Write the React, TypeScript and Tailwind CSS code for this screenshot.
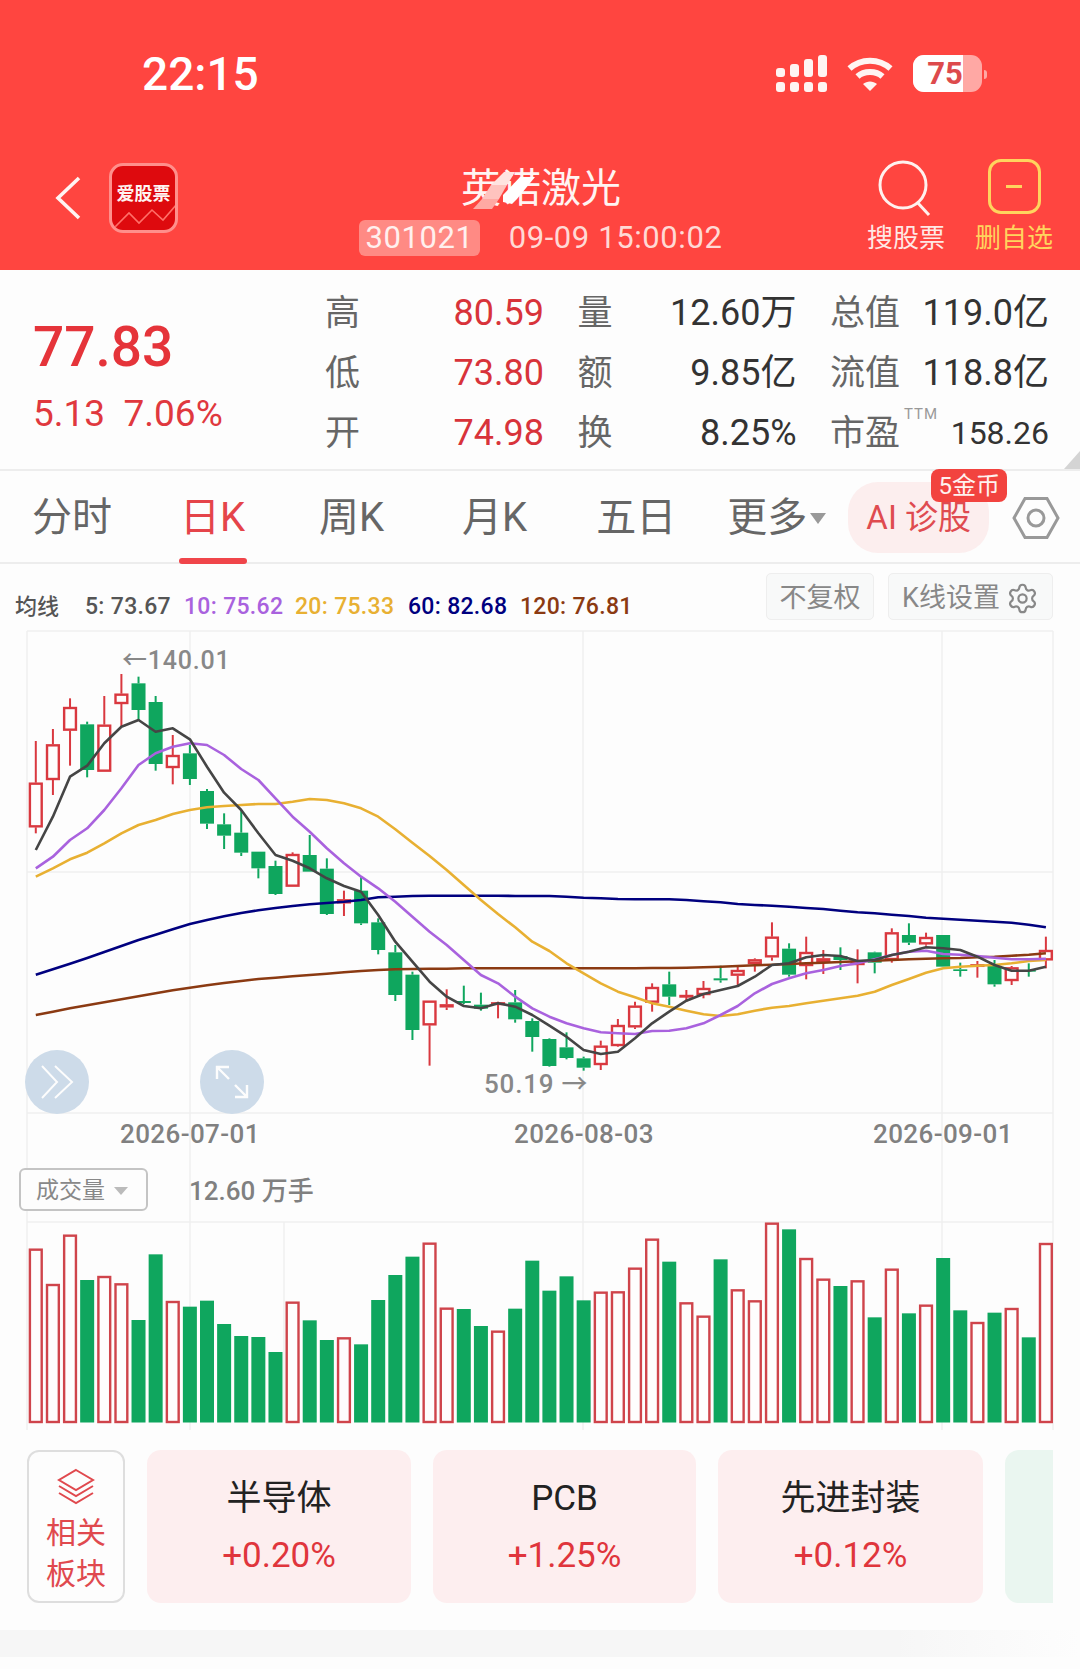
import { Settings } from "lucide-react";

const FONT = "font-['Roboto','Noto_Sans_CJK_SC',sans-serif]";

const RED = "#D9383F";
const GREEN = "#0FA65E";

// x of candle i in page pixels
const cx = (i: number) => 35.8 + 17.12 * i;
// samples are read at 3x, from three crops of the chart
const toY = (i: number, v: number) => (i < 20 ? 620 : i < 30 ? 900 : 880) + v / 3;

// body top, body bottom, wick top, wick bottom, up
type Candle = [number, number, number, number, boolean];
const candles: Candle[] = [
  [488, 622, 363, 640, true],
  [373, 480, 327, 525, true],
  [261, 332, 235, 437, true],
  [313, 450, 305, 472, false],
  [314, 455, 228, 455, true],
  [221, 252, 162, 318, true],
  [190, 270, 170, 300, false],
  [246, 432, 228, 452, false],
  [405, 444, 345, 493, true],
  [400, 477, 375, 495, false],
  [513, 611, 507, 627, false],
  [613, 647, 580, 687, false],
  [638, 698, 570, 708, false],
  [695, 745, 695, 775, false],
  [738, 822, 722, 825, false],
  [702, 800, 697, 800, true],
  [705, 755, 645, 755, false],
  [746, 882, 715, 885, false],
  [838, 850, 812, 888, true],
  [812, 910, 770, 915, false],
  [67, 150, 55, 163, false],
  [157, 285, 135, 303, false],
  [224, 390, 215, 420, false],
  [302, 376, 302, 497, true],
  [313, 322, 268, 330, true],
  [303, 309, 257, 312, false],
  [314, 326, 278, 332, false],
  [307, 315, 305, 355, true],
  [307, 358, 270, 368, false],
  [363, 411, 355, 455, false],
  [477, 558, 475, 560, false],
  [502, 534, 457, 538, false],
  [535, 563, 530, 572, false],
  [497, 555, 482, 570, true],
  [435, 498, 417, 500, true],
  [377, 442, 365, 447, true],
  [321, 368, 310, 395, true],
  [313, 350, 275, 375, false],
  [345, 350, 330, 365, true],
  [324, 345, 303, 355, true],
  [295, 301, 257, 308, false],
  [270, 287, 255, 315, true],
  [238, 252, 235, 275, true],
  [170, 232, 127, 242, true],
  [206, 284, 190, 290, false],
  [216, 258, 170, 298, true],
  [235, 246, 210, 282, true],
  [228, 240, 202, 270, false],
  [243, 255, 208, 310, true],
  [217, 248, 215, 280, false],
  [157, 240, 145, 248, true],
  [165, 188, 130, 195, false],
  [171, 193, 158, 197, true],
  [165, 260, 165, 260, false],
  [268, 273, 248, 290, false],
  [253, 260, 243, 293, true],
  [258, 313, 240, 320, false],
  [262, 303, 258, 315, true],
  [270, 275, 250, 290, false],
  [210, 241, 170, 265, true],
];

const ma5 = [
  690, 590, 470, 437, 370, 320, 300, 335, 325, 358, 440, 518, 570, 640, 705, 722, 745, 775, 798, 815,
  45, 125, 185, 245, 290, 318, 325, 310, 320, 345,
  437, 470, 510, 522, 515, 475, 430, 395, 362, 342, 330, 318, 290, 255, 250, 232, 225, 228, 243, 240, 225, 215, 202, 205, 210, 230, 255, 272, 272, 260,
];
const ma10 = [
  745, 710, 660, 625, 570, 505, 435, 400, 380, 370, 375, 405, 447, 480, 535, 590, 635, 685, 730, 770,
  -35, 5, 50, 95, 135, 180, 225, 250, 290, 325,
  410, 430, 445, 457, 460, 462, 453, 452, 445, 430, 405, 378, 340, 312, 295, 280, 270, 258, 250, 238, 225, 215, 212, 222, 224, 228, 233, 238, 238, 236,
];
const ma20 = [
  770, 745, 718, 698, 670, 640, 615, 600, 582, 570, 562, 558, 555, 552, 552, 545, 537, 540, 550, 565,
  -250, -212, -172, -132, -90, -45, 0, 42, 82, 125,
  213, 250, 280, 310, 335, 352, 370, 380, 392, 403, 408, 403, 392, 383, 378, 370, 362, 355, 347, 335, 315, 297, 278, 265, 260, 257, 255, 250, 243, 240,
];
// first 20 of these two were read off the lower crop, so shifted by 840
const ma60 = [
  1064, 1048, 1031, 1014, 996, 978, 960, 944, 928, 912, 900, 889, 879, 871, 864, 858, 853, 849, 845, 840,
  -8, -10, -12, -13, -13, -13, -13, -13, -12, -12,
  48, 50, 53, 55, 57, 58, 58, 58, 60, 64, 67, 72, 75, 77, 80, 84, 87, 92, 97, 100, 104, 108, 113, 116, 119, 122, 125, 128, 134, 142,
];
const ma120 = [
  1185, 1175, 1165, 1156, 1147, 1138, 1129, 1120, 1111, 1103, 1096, 1089, 1083, 1077, 1073, 1069, 1065, 1061, 1057, 1053,
  210, 208, 207, 206, 206, 205, 205, 205, 205, 205,
  265, 265, 265, 265, 265, 265, 264, 264, 263, 262, 260, 258, 256, 254, 252, 250, 248, 246, 244, 242, 240, 238, 236, 235, 234, 232, 230, 227, 224, 220,
];

const volumes = [
  146, 252, 104, 240, 228, 250, 360, 163, 303, 320, 302, 372, 408, 411, 456, 305, 361, 420, 412, 433, 300, 225, 170, 128, 323, 327, 378, 392, 326, 182,
  272, 229, 301, 275, 274, 203, 116, 185, 307, 347, 178, 268, 301, 68, 88, 174, 236, 258, 241, 352, 206, 340, 314, 174, 331, 366, 338, 324, 412, 129,
];

const linePoints = (values: number[]) =>
  values.map((v, i) => `${cx(i).toFixed(1)},${toY(i, v).toFixed(1)}`).join(" ");

function Chart() {
  return (
    <svg width="1080" height="815" viewBox="0 625 1080 815" className="block">
      <g stroke="#EFEFEF" strokeWidth="1.5" fill="none">
        <path d="M27 631H1053M27 872H1053M27 1113H1053M27 1222H1053" />
        <path d="M27 631V1430M190 631V1430M583 631V1430M942 631V1430M1053 631V1430M284 1222V1420" />
      </g>

      {candles.map(([bt, bb, wt, wb, up], i) => {
        const x = cx(i);
        const top = toY(i, bt);
        const bottom = toY(i, bb);
        const color = up ? RED : GREEN;
        return (
          <g key={i}>
            <line x1={x} x2={x} y1={toY(i, wt)} y2={top} stroke={color} strokeWidth="2" />
            <line x1={x} x2={x} y1={bottom} y2={toY(i, wb)} stroke={color} strokeWidth="2" />
            {up ? (
              <rect x={x - 5.9} y={top + 1} width="11.8" height={Math.max(bottom - top - 2, 0.5)} fill="#FEFDFD" stroke={color} strokeWidth="2.4" />
            ) : (
              <rect x={x - 7} y={top} width="14" height={Math.max(bottom - top, 1.5)} fill={color} />
            )}
          </g>
        );
      })}

      <g fill="none" strokeLinejoin="round" strokeWidth="2.6">
        <polyline points={linePoints(ma120)} stroke="#8B3A12" />
        <polyline points={linePoints(ma60)} stroke="#00007F" />
        <polyline points={linePoints(ma20)} stroke="#E8B032" />
        <polyline points={linePoints(ma10)} stroke="#A962DE" />
        <polyline points={linePoints(ma5)} stroke="#454545" />
      </g>

      {volumes.map((v, i) => {
        const x = cx(i);
        const top = 1200 + v / 3;
        return candles[i][4] ? (
          <rect key={i} x={x - 5.9} y={top + 1} width="11.8" height={1421 - top} fill="#FEFDFD" stroke="#CF444B" strokeWidth="2.4" />
        ) : (
          <rect key={i} x={x - 7} y={top} width="14" height={1422.5 - top} fill={GREEN} />
        );
      })}
    </svg>
  );
}

function StatusBar() {
  const heights = ["h-[9px]", "h-[13px]", "h-[18px]", "h-[22px]"];
  return (
    <div className="flex h-[146px] items-start pl-[142px] pt-[47px]">
      <span className="text-[46px] leading-[54px] font-medium text-white">22:15</span>
      <div className="ml-[517px] mt-[8px] flex gap-[5px]">
        {heights.map((h) => (
          <div key={h} className="flex h-[37px] w-[9px] flex-col justify-end gap-[5px]">
            <div className={`${h} rounded-[3px] bg-[#FFF4F2]`} />
            <div className="h-[10px] rounded-[3px] bg-[#FFF4F2]" />
          </div>
        ))}
      </div>
      <svg width="46" height="36" viewBox="0 0 46 36" className="ml-[20px] mt-[9px]" fill="none" stroke="#FFF4F2" strokeWidth="6">
        <path d="M2.5 12.5C14 2 32 2 43.5 12.5" />
        <path d="M10.5 20.5C17 14.5 29 14.5 35.5 20.5" />
        <path d="M16 28 23 35 30 28C26 24.5 20 24.5 16 28Z" fill="#FFF4F2" stroke="none" />
      </svg>
      <div className="relative ml-[20px] mt-[8px] flex h-[37px] w-[69px] overflow-hidden rounded-[11px] bg-[#FFA8A4]">
        <div className="flex h-full w-[50px] items-center justify-end bg-white text-[31px] leading-none font-bold text-[#DD4A4C]">75</div>
      </div>
      <div className="ml-[2px] mt-[23px] h-[9px] w-[3px] rounded-r bg-[#FFA8A4]" />
    </div>
  );
}

function NavBar() {
  return (
    <div className="relative flex h-[124px] items-start">
      <svg width="26" height="44" viewBox="0 0 26 44" className="ml-[55px] mt-[30px]" fill="none" stroke="#FFF4F2" strokeWidth="3.6">
        <path d="M24 2 3 22 24 42" />
      </svg>
      <div className="relative ml-[28px] mt-[17px] flex h-[70px] w-[69px] justify-center overflow-hidden rounded-[14px] border-[3px] border-[#FF8F8B] bg-[#DE0A0E] pt-[17px] text-[18px] leading-[22px] font-bold text-[#FFF4F2]">
        爱股票
        <svg width="64" height="30" viewBox="0 0 64 30" className="absolute bottom-0 left-0" fill="none" stroke="#FF6F68" strokeWidth="1.6">
          <path d="M2 28 17 13 27 23 40 10 51 20 64 5" />
        </svg>
      </div>

      <div className="absolute left-[360px] top-[21px] flex w-[362px] flex-col items-center">
        <div className="relative text-[40px] leading-[44px] text-[#FFF4F2]">
          英诺激光
          <svg width="66" height="44" viewBox="0 0 66 44" className="absolute left-[10px] top-0">
            <polygon points="2,42 11,32 28,32 21,42" fill="#FFA9A3" />
            <polygon points="11,32 20,18 36,18 28,32" fill="#FFC3BE" />
            <polygon points="20,18 33,5 44,5 36,18" fill="#FFE3E0" />
            <polygon points="32,28 49,10 64,10 46,32 41,37 32,35" fill="#FFFFFF" />
          </svg>
        </div>
        <div className="mt-[9px] flex items-center text-[31px] leading-[36px] tracking-[0.6px] text-[#FFD9D5]">
          <span className="rounded-[6px] bg-[#FF8A84] px-[6px] text-[#FFF0EE]">301021</span>
          <span className="ml-[29px] whitespace-nowrap">09-09 15:00:02</span>
        </div>
      </div>

      <div className="ml-auto mr-[25px] mt-[13px] flex items-start">
        <div className="flex w-[82px] flex-col items-center text-[26px] leading-[30px] text-[#FFE8E5]">
          <svg width="58" height="58" viewBox="0 0 58 58" fill="none" stroke="#FFF1EE" strokeWidth="3">
            <circle cx="26" cy="26" r="23" />
            <path d="M40 43 52 56" />
          </svg>
          <span className="mt-[6px] whitespace-nowrap">搜股票</span>
        </div>
        <div className="ml-[26px] flex w-[82px] flex-col items-center text-[26px] leading-[30px] text-[#FFD45E]">
          <div className="flex h-[55px] w-[53px] items-center justify-center rounded-[13px] border-[3px] border-[#FFD45E]">
            <div className="h-[3px] w-[16px] bg-[#FFD45E]" />
          </div>
          <span className="mt-[9px] whitespace-nowrap">删自选</span>
        </div>
      </div>
    </div>
  );
}

const statRows = [
  [
    { label: "高", value: "80.59", red: true },
    { label: "量", value: "12.60万" },
    { label: "总值", value: "119.0亿" },
  ],
  [
    { label: "低", value: "73.80", red: true },
    { label: "额", value: "9.85亿" },
    { label: "流值", value: "118.8亿" },
  ],
  [
    { label: "开", value: "74.98", red: true },
    { label: "换", value: "8.25%" },
    { label: "市盈", value: "158.26", ttm: true },
  ],
];

function Stats() {
  return (
    <div className="relative flex h-[201px] border-b-2 border-[#EDEDED]">
      <div className="w-[325px] pl-[33px] pt-[44px]">
        <div className="text-[55px] leading-[66px] font-medium text-[#E5343A]">77.83</div>
        <div className="mt-[13px] text-[37px] leading-[42px] text-[#E0383E]">5.13&nbsp;&nbsp;7.06%</div>
      </div>
      <div className="grid grid-cols-[219px_219px_219px] content-start gap-x-[33.5px] gap-y-[16px] pt-[21px]">
        {statRows.flat().map((s) => (
          <div key={s.label} className="relative flex h-[44px] items-center justify-between">
            <span className="text-[35px] leading-none text-[#666666]">{s.label}</span>
            {s.ttm && <span className="absolute left-[74px] top-[-4px] text-[15px] leading-none tracking-[1px] text-[#999999]">TTM</span>}
            <span className={s.red ? "text-[36px] text-[#D8333A]" : s.ttm ? "text-[32px] text-[#333333]" : "text-[36px] text-[#333333]"}>{s.value}</span>
          </div>
        ))}
      </div>
      <div className="absolute bottom-0 right-0 h-0 w-0 border-b-[18px] border-l-[16px] border-b-[#D4D4D4] border-l-transparent" />
    </div>
  );
}

function Tabs() {
  return (
    <div className="relative flex h-[93px] items-start border-b-2 border-[#EDEDED] pt-[19px] text-[40px] leading-[56px] text-[#666666]">
      <span className="ml-[32px]">分时</span>
      <span className="relative ml-[68px] w-[68px] whitespace-nowrap text-[#E5444A]">
        日K
        <div className="absolute left-[-1px] top-[68px] h-[6px] w-[68px] rounded-full bg-[#F0454A]" />
      </span>
      <span className="ml-[71px]">周K</span>
      <span className="ml-[78px]">月K</span>
      <span className="ml-[69px]">五日</span>
      <span className="ml-[51px]">更多</span>
      <div className="ml-[3px] mt-[23px] h-0 w-0 border-x-[8px] border-t-[11px] border-x-transparent border-t-[#999999]" />
      <div className="relative ml-[22px] mt-[-8px] flex h-[71px] w-[141px] items-center justify-center rounded-[30px] bg-[#FCEEEE] text-[33px] text-[#DF4B50]">
        AI 诊股
        <span className="absolute left-[83px] top-[-13px] flex h-[33px] w-[76px] items-center justify-center rounded-[8px] bg-[#F2433F] text-[24px] leading-none text-[#FFF2EF]">5金币</span>
      </div>
      <svg width="50" height="44" viewBox="0 0 50 44" className="ml-[22px] mt-[6px]" fill="none" stroke="#999999" strokeWidth="3">
        <path d="M14 2.5H36L47 22 36 41.5H14L3 22Z" />
        <circle cx="25" cy="22" r="8" />
      </svg>
    </div>
  );
}

function Legend() {
  const items = [
    { text: "5: 73.67", color: "text-[#555555]", w: "w-[99px]" },
    { text: "10: 75.62", color: "text-[#A962DE]", w: "w-[111px]" },
    { text: "20: 75.33", color: "text-[#E8B032]", w: "w-[113px]" },
    { text: "60: 82.68", color: "text-[#00007F]", w: "w-[112px]" },
    { text: "120: 76.81", color: "text-[#8B3A12]", w: "w-[120px]" },
  ];
  return (
    <div className="flex h-[61px] items-start pl-[15px]">
      <span className="mt-[29px] w-[70px] text-[22px] leading-[28px] font-medium text-[#555555]">均线</span>
      {items.map((it) => (
        <span key={it.text} className={`mt-[29px] text-[23px] leading-[28px] font-medium tracking-[0.3px] ${it.color} ${it.w}`}>
          {it.text}
        </span>
      ))}
      <div className="ml-auto mr-[27px] mt-[9px] flex gap-[14px] text-[27px] text-[#888888]">
        <div className="flex h-[47px] w-[108px] items-center justify-center rounded-[5px] border border-[#EEEEEE] bg-[#F8F9F9] pt-[3px]">不复权</div>
        <div className="flex h-[47px] w-[165px] items-center justify-center gap-[6px] rounded-[5px] border border-[#EEEEEE] bg-[#F8F9F9] pt-[3px]">
          K线设置
          <Settings size={33} strokeWidth={1.6} />
        </div>
      </div>
    </div>
  );
}

function ChartSection() {
  return (
    <div className="relative h-[815px]">
      <Chart />
      <span className="absolute left-[122px] top-[16px] text-[25px] leading-[40px] font-medium tracking-[0.8px] text-[#888888]">←140.01</span>
      <span className="absolute left-[484px] top-[439px] text-[26px] leading-[40px] font-medium tracking-[0.8px] text-[#888888]">50.19 →</span>

      <div className="absolute left-[25px] top-[425px] flex h-[64px] w-[64px] items-center justify-center rounded-full bg-[#CDDBE9]">
        <svg width="36" height="36" viewBox="0 0 36 36" fill="none" stroke="#FDFDFD" strokeWidth="2">
          <path d="M3 2 18 18 3 34M16 2 33 18 16 34" />
        </svg>
      </div>
      <div className="absolute left-[200px] top-[425px] flex h-[64px] w-[64px] items-center justify-center rounded-full bg-[#CDDBE9]">
        <svg width="36" height="36" viewBox="0 0 36 36" fill="none" stroke="#FDFDFD" strokeWidth="2.4">
          <path d="M3 15V3H15M3 3 15 15M21 21 33 33M33 21V33H21" />
        </svg>
      </div>

      <span className="absolute left-[120px] top-[490px] text-[26px] leading-[38px] font-medium tracking-[0.4px] text-[#808080]">2026-07-01</span>
      <span className="absolute left-[514px] top-[490px] text-[26px] leading-[38px] font-medium tracking-[0.4px] text-[#808080]">2026-08-03</span>
      <span className="absolute left-[873px] top-[490px] text-[26px] leading-[38px] font-medium tracking-[0.4px] text-[#808080]">2026-09-01</span>

      <div className="absolute left-[19px] top-[543px] flex h-[43px] w-[129px] items-center justify-center gap-[9px] rounded-[6px] border-2 border-[#C4C4C4] bg-[#FDFDFD] pt-[3px] pr-[3px] text-[23px] text-[#888888]">
        成交量
        <div className="h-0 w-0 border-x-[7px] border-t-[8px] border-x-transparent border-t-[#BBBBBB]" />
      </div>
      <span className="absolute left-[189px] top-[547px] text-[26px] leading-[38px] font-medium text-[#808080]">12.60 万手</span>
    </div>
  );
}

function Sectors() {
  const cards = [
    { name: "半导体", pct: "+0.20%", w: "w-[264px]" },
    { name: "PCB", pct: "+1.25%", w: "w-[263px]" },
    { name: "先进封装", pct: "+0.12%", w: "w-[265px]" },
  ];
  return (
    <div className="flex h-[190px] gap-[22px] pl-[27px] pt-[10px]">
      <div className="flex h-[153px] w-[98px] flex-col items-center rounded-[12px] border-2 border-[#DEDEDE] pt-[16px] text-[30px] leading-[40px] text-[#E0494E]">
        <svg width="40" height="38" viewBox="0 0 40 38" fill="none" stroke="#E0494E" strokeWidth="2">
          <path d="M20 2 37 12 20 22 3 12Z" />
          <path d="M3 18 20 28 37 18" />
          <path d="M3 25 20 35 37 25" />
        </svg>
        <span className="mt-[7px]">相关</span>
        <span className="mt-[1px]">板块</span>
      </div>
      {cards.map((c) => (
        <div key={c.name} className={`flex h-[153px] flex-col items-center rounded-[14px] bg-[#FDEEEF] pt-[26px] ${c.w}`}>
          <span className="text-[35px] leading-[46px] text-[#222222]">{c.name}</span>
          <span className="mt-[12px] text-[35px] leading-[44px] text-[#E0353C]">{c.pct}</span>
        </div>
      ))}
      <div className="h-[153px] w-[48px] rounded-l-[14px] bg-[#EAF6F0]" />
    </div>
  );
}

export default function App() {
  return (
    <div className={`h-[1669px] w-[1080px] overflow-hidden bg-[#FDFDFD] ${FONT}`}>
      <div className="h-[270px] bg-[#FF4540]">
        <StatusBar />
        <NavBar />
      </div>
      <Stats />
      <Tabs />
      <Legend />
      <ChartSection />
      <Sectors />
      <div className="flex h-[27px] justify-end bg-[#F6F6F6]">
        <div className="w-[190px] bg-gradient-to-r from-transparent to-[#FDFDFD]" />
      </div>
    </div>
  );
}
